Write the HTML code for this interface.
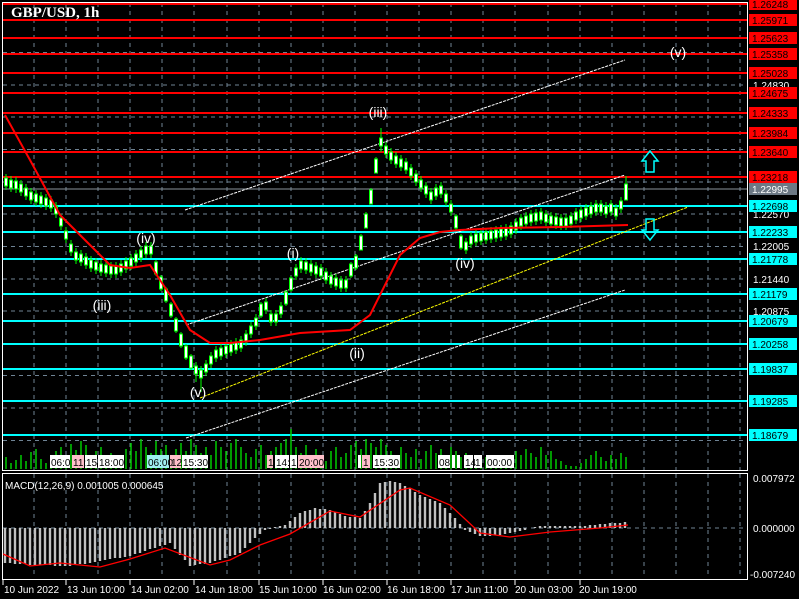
<!DOCTYPE html>
<html><head><meta charset="utf-8"><style>
html,body{margin:0;padding:0;background:#000;width:799px;height:599px;overflow:hidden}
svg{display:block}
text{font-family:"Liberation Sans",sans-serif;font-size:10px}
</style></head><body>
<svg width="799" height="599" xmlns="http://www.w3.org/2000/svg">
<g stroke="#6f8394" stroke-dasharray="4,4" stroke-width="1">
<path d="M34 3V470M66 3V470M98 3V470M130 3V470M162 3V470M194 3V470M227 3V470M259 3V470M291 3V470M323 3V470M355 3V470M387 3V470M419 3V470M451 3V470M483 3V470M515 3V470M548 3V470M580 3V470M612 3V470M644 3V470M676 3V470M708 3V470M740 3V470"/>
<path d="M34 474V578M66 474V578M98 474V578M130 474V578M162 474V578M194 474V578M227 474V578M259 474V578M291 474V578M323 474V578M355 474V578M387 474V578M419 474V578M451 474V578M483 474V578M515 474V578M548 474V578M580 474V578M612 474V578M644 474V578M676 474V578M708 474V578M740 474V578"/>
<path d="M3 20.5H747M3 52.5H747M3 85H747M3 117H747M3 149.5H747M3 182H747M3 214H747M3 246.5H747M3 279H747M3 311H747M3 343.5H747M3 375.5H747M3 408H747M3 440.5H747M3 528H747"/>
</g>
<g stroke="#ff0000" stroke-width="2">
<path d="M3 4H747M3 20H747M3 38H747M3 54H747M3 73H747M3 93H747M3 113H747M3 133H747M3 152H747M3 177H747"/>
</g>
<line x1="3" y1="189" x2="747" y2="189" stroke="#8a949c"/>
<g stroke="#00ffff" stroke-width="2">
<path d="M3 206H747M3 232H747M3 259H747M3 294H747M3 321H747M3 344H747M3 369H747M3 401H747M3 435H747"/>
</g>
<g stroke="#fff" stroke-dasharray="3,1">
<line x1="185" y1="210" x2="625" y2="60"/><line x1="186" y1="325" x2="625" y2="175"/><line x1="186" y1="438" x2="625" y2="290"/>
</g>
<line x1="200" y1="398" x2="688" y2="207" stroke="#ffff00" stroke-dasharray="3,1"/>
<path stroke="#00ff00" stroke-width="1" fill="none" d="M6 174v16M11 176v16M16 177v16M21 180v16M26 184v16M31 188v16M36 190v16M41 192v16M46 194v16M51 196v16M56 202v16M61 214v16M66 227v16M71 240v16M76 248v16M81 250v16M86 253v16M91 256v16M96 258v16M101 260v16M106 261v16M111 262v16M116 262v16M121 260v16M126 257v16M131 254v16M136 250v16M141 246v16M146 242v16M151 242v16M156 260v16M161 275v16M166 287v16M171 302v16M176 317v16M181 332v16M186 344v16M191 354v16M196 362v20M201 366v26M206 360v16M211 352v16M216 346v16M221 344v16M226 342v16M231 340v16M236 338v16M241 336v16M246 330v16M251 322v16M256 314v16M261 302v16M266 298v16M271 310v16M276 310v16M281 302v16M286 290v16M291 276v16M296 264v16M301 257v16M306 258v16M311 260v16M316 262v16M321 264v16M326 268v16M331 272v16M336 274v16M341 276v16M346 276v16M351 262v16M356 254v16M361 234v16M366 212v16M371 188v16M376 157v16M381 128v24M386 142v16M391 148v16M396 152v16M401 155v16M406 158v16M411 164v16M416 170v16M421 176v16M426 182v16M431 188v16M436 184v16M441 182v16M446 190v16M451 200v16M456 214v16M461 234v16M466 238v16M471 232v16M476 230v16M481 229v16M486 228v16M491 227v16M496 226v16M501 225v16M506 224v16M511 222v16M516 218v16M521 214v16M526 212v16M531 210v16M536 209v16M541 208v16M546 210v16M551 212v16M556 213v16M561 214v16M566 214v16M571 212v16M576 208v16M581 206v16M586 204v16M591 202v16M596 200v16M601 200v16M606 202v16M611 200v16M616 204v16M621 197v16M626 176v20"/>
<path stroke="#00ff00" stroke-width="1" fill="#fff" d="M4.5 178h3v8h-3zM9.5 180h3v8h-3zM14.5 181h3v8h-3zM19.5 184h3v8h-3zM24.5 188h3v8h-3zM29.5 192h3v8h-3zM34.5 194h3v8h-3zM39.5 196h3v8h-3zM44.5 198h3v8h-3zM49.5 200h3v8h-3zM54.5 206h3v8h-3zM59.5 218h3v8h-3zM64.5 231h3v8h-3zM69.5 244h3v8h-3zM74.5 252h3v8h-3zM79.5 254h3v8h-3zM84.5 257h3v8h-3zM89.5 260h3v8h-3zM94.5 262h3v8h-3zM99.5 264h3v8h-3zM104.5 265h3v8h-3zM109.5 266h3v8h-3zM114.5 266h3v8h-3zM119.5 264h3v8h-3zM124.5 261h3v8h-3zM129.5 258h3v8h-3zM134.5 254h3v8h-3zM139.5 250h3v8h-3zM144.5 246h3v8h-3zM149.5 246h3v8h-3zM154.5 262h3v12h-3zM159.5 277h3v12h-3zM164.5 289h3v12h-3zM169.5 304h3v12h-3zM174.5 319h3v12h-3zM179.5 334h3v12h-3zM184.5 346h3v12h-3zM189.5 356h3v12h-3zM194.5 366h3v8h-3zM199.5 370h3v8h-3zM204.5 364h3v8h-3zM209.5 356h3v8h-3zM214.5 350h3v8h-3zM219.5 348h3v8h-3zM224.5 346h3v8h-3zM229.5 344h3v8h-3zM234.5 342h3v8h-3zM239.5 340h3v8h-3zM244.5 334h3v8h-3zM249.5 326h3v8h-3zM254.5 318h3v8h-3zM259.5 304h3v12h-3zM264.5 302h3v8h-3zM269.5 314h3v8h-3zM274.5 314h3v8h-3zM279.5 306h3v8h-3zM284.5 292h3v12h-3zM289.5 278h3v12h-3zM294.5 268h3v8h-3zM299.5 261h3v8h-3zM304.5 262h3v8h-3zM309.5 264h3v8h-3zM314.5 266h3v8h-3zM319.5 268h3v8h-3zM324.5 272h3v8h-3zM329.5 276h3v8h-3zM334.5 278h3v8h-3zM339.5 280h3v8h-3zM344.5 280h3v8h-3zM349.5 264h3v12h-3zM354.5 256h3v12h-3zM359.5 236h3v14h-3zM364.5 214h3v14h-3zM369.5 190h3v14h-3zM374.5 159h3v14h-3zM379.5 138h3v8h-3zM384.5 146h3v8h-3zM389.5 152h3v8h-3zM394.5 156h3v8h-3zM399.5 159h3v8h-3zM404.5 162h3v8h-3zM409.5 168h3v8h-3zM414.5 174h3v8h-3zM419.5 180h3v8h-3zM424.5 186h3v8h-3zM429.5 192h3v8h-3zM434.5 188h3v8h-3zM439.5 186h3v8h-3zM444.5 194h3v8h-3zM449.5 204h3v8h-3zM454.5 216h3v12h-3zM459.5 236h3v12h-3zM464.5 242h3v8h-3zM469.5 236h3v8h-3zM474.5 234h3v8h-3zM479.5 233h3v8h-3zM484.5 232h3v8h-3zM489.5 231h3v8h-3zM494.5 230h3v8h-3zM499.5 229h3v8h-3zM504.5 228h3v8h-3zM509.5 226h3v8h-3zM514.5 222h3v8h-3zM519.5 218h3v8h-3zM524.5 216h3v8h-3zM529.5 214h3v8h-3zM534.5 213h3v8h-3zM539.5 212h3v8h-3zM544.5 214h3v8h-3zM549.5 216h3v8h-3zM554.5 217h3v8h-3zM559.5 218h3v8h-3zM564.5 218h3v8h-3zM569.5 216h3v8h-3zM574.5 212h3v8h-3zM579.5 210h3v8h-3zM584.5 208h3v8h-3zM589.5 206h3v8h-3zM594.5 204h3v8h-3zM599.5 204h3v8h-3zM604.5 206h3v8h-3zM609.5 204h3v8h-3zM614.5 208h3v8h-3zM619.5 201h3v8h-3zM624.5 184h3v16h-3z"/>
<polyline fill="none" stroke="#ff0000" stroke-width="2" points="5,115 30,160 60,215 90,245 110,265 130,268 150,265 170,295 190,330 210,343 230,343 260,340 300,333 350,330 370,315 400,255 420,238 440,232 460,230 500,228 560,227 628,225"/>
<g fill="#fff" font-size="14" text-anchor="middle" style="font-size:14px">
<text x="678" y="57" style="font-size:14px">(v)</text><text x="378" y="117" style="font-size:14px">(iii)</text><text x="146" y="243" style="font-size:14px">(iv)</text><text x="102" y="310" style="font-size:14px">(iii)</text><text x="293" y="258" style="font-size:14px">(i)</text><text x="357" y="358" style="font-size:14px">(ii)</text><text x="465" y="268" style="font-size:14px">(iv)</text><text x="198" y="397" style="font-size:14px">(v)</text>
</g>
<path d="M650 151 L658 161 L654 161 L654 172 L646 172 L646 161 L642 161 Z" fill="none" stroke="#00ffff" stroke-width="1.5"/>
<path d="M650 240 L658 230 L654 230 L654 219 L646 219 L646 230 L642 230 Z" fill="none" stroke="#00ffff" stroke-width="1.5"/>
<path stroke="#00cc00" stroke-width="1.5" d="M6 469v-12M11 469v-6M16 469v-9M21 469v-14M26 469v-8M31 469v-17M36 469v-20M41 469v-10M46 469v-6M51 469v-12M56 469v-18M61 469v-22M66 469v-14M71 469v-25M76 469v-19M81 469v-28M86 469v-24M91 469v-12M96 469v-18M101 469v-22M106 469v-10M111 469v-16M116 469v-8M121 469v-14M126 469v-20M131 469v-26M136 469v-18M141 469v-30M146 469v-22M151 469v-16M156 469v-28M161 469v-20M166 469v-24M171 469v-14M176 469v-20M181 469v-26M186 469v-18M191 469v-30M196 469v-24M201 469v-16M206 469v-22M211 469v-14M216 469v-28M221 469v-22M226 469v-18M231 469v-26M236 469v-30M241 469v-22M246 469v-16M251 469v-12M256 469v-20M261 469v-24M266 469v-14M271 469v-18M276 469v-22M281 469v-26M286 469v-30M291 469v-40M296 469v-22M301 469v-16M306 469v-24M311 469v-12M316 469v-20M321 469v-14M326 469v-8M331 469v-18M336 469v-22M341 469v-12M346 469v-16M351 469v-24M356 469v-28M361 469v-20M366 469v-30M371 469v-26M376 469v-22M381 469v-30M386 469v-24M391 469v-18M396 469v-14M401 469v-22M406 469v-16M411 469v-12M416 469v-20M421 469v-10M426 469v-18M431 469v-24M436 469v-16M441 469v-20M446 469v-14M451 469v-22M456 469v-18M461 469v-12M466 469v-16M471 469v-10M476 469v-14M481 469v-8M486 469v-12M491 469v-6M496 469v-10M501 469v-14M506 469v-8M511 469v-12M516 469v-18M521 469v-14M526 469v-20M531 469v-16M536 469v-12M541 469v-22M546 469v-14M551 469v-18M556 469v-10M561 469v-8M566 469v-4M571 469v-3M576 469v-3M581 469v-6M586 469v-10M591 469v-14M596 469v-18M601 469v-12M606 469v-8M611 469v-14M616 469v-10M621 469v-16M626 469v-12"/>
<g>
<rect x="50" y="455" width="20" height="13" fill="#fff"/><rect x="72" y="455" width="12" height="13" fill="#ffc0cb"/><rect x="85" y="455" width="12" height="13" fill="#fff"/><rect x="98" y="455" width="26" height="13" fill="#fff"/>
<rect x="147" y="455" width="22" height="13" fill="#a0f0f0"/><rect x="170" y="455" width="11" height="13" fill="#ffc0cb"/><rect x="182" y="455" width="26" height="13" fill="#fff"/>
<rect x="267" y="455" width="6" height="13" fill="#ffc0cb"/><rect x="275" y="455" width="14" height="13" fill="#fff"/><rect x="290" y="455" width="7" height="13" fill="#fff"/><rect x="298" y="455" width="26" height="13" fill="#ffc0cb"/>
<rect x="358" y="455" width="3" height="13" fill="#fff"/><rect x="362" y="455" width="8" height="13" fill="#ffc0cb"/><rect x="373" y="455" width="27" height="13" fill="#fff"/>
<rect x="438" y="455" width="12" height="13" fill="#fff"/><rect x="452" y="455" width="3" height="13" fill="#fff"/><rect x="457" y="455" width="3" height="13" fill="#fff"/><rect x="464" y="455" width="9" height="13" fill="#fff"/><rect x="474" y="455" width="8" height="13" fill="#fff"/><rect x="486" y="455" width="28" height="13" fill="#fff"/>
</g>
<g fill="#000">
<text x="51" y="466">06:0</text><text x="73" y="466">11:</text><text x="86" y="466">15</text><text x="99" y="466">18:00</text>
<text x="148" y="466">06:00</text><text x="171" y="466">12</text><text x="183" y="466">15:30</text>
<text x="268" y="466">1</text><text x="276" y="466">14:</text><text x="291" y="466">1</text><text x="299" y="466">20:00</text>
<text x="363" y="466">1</text><text x="374" y="466">15:30</text>
<text x="439" y="466">08</text><text x="465" y="466">14</text><text x="475" y="466">1</text><text x="487" y="466">00:00</text>
</g>
<path stroke="#c0c0c0" stroke-width="2.4" d="M5 528v35M10 528v35M15 528v36M20 528v36M25 528v36M30 528v37M35 528v37M40 528v37M45 528v37M50 528v37M55 528v38M60 528v38M65 528v38M70 528v38M75 528v37M80 528v36M85 528v36M90 528v35M95 528v34M100 528v33M105 528v32M110 528v31M115 528v30M120 528v30M125 528v29M130 528v28M135 528v26M140 528v25M145 528v23M150 528v21M155 528v20M160 528v18M165 528v17M170 528v15M175 528v21M180 528v27M185 528v32M190 528v38M195 528v37M200 528v36M205 528v36M210 528v35M215 528v33M220 528v32M225 528v30M230 528v28M235 528v27M240 528v25M245 528v20M250 528v15M255 528v10M260 528v6M265 528v2M270 528v1M275 528v-1M280 528v-2M285 528v-3M290 528v-7M295 528v-11M300 528v-15M305 528v-17M310 528v-18M315 528v-20M320 528v-19M325 528v-19M330 528v-18M335 528v-16M340 528v-14M345 528v-12M350 528v-11M355 528v-11M360 528v-10M365 528v-17M370 528v-25M375 528v-35M380 528v-45M385 528v-46M390 528v-47M395 528v-46M400 528v-45M405 528v-42M410 528v-40M415 528v-36M420 528v-33M425 528v-31M430 528v-29M435 528v-27M440 528v-25M445 528v-20M450 528v-15M455 528v-10M460 528v-4M465 528v2M470 528v4M475 528v6M480 528v8M485 528v8M490 528v8M495 528v7M500 528v7M505 528v6M510 528v5M515 528v4M520 528v3M525 528v2M535 528v-1M540 528v-2M545 528v-2M550 528v-2M555 528v-2M560 528v-2M565 528v-2M570 528v-2M575 528v-2M580 528v-2M585 528v-2M590 528v-3M595 528v-3M600 528v-4M605 528v-4M610 528v-5M615 528v-5M620 528v-5M625 528v-6"/>
<polyline fill="none" stroke="#ff0000" stroke-width="1.3" points="3,554 30,566 60,563 100,567 130,559 165,548 210,565 230,560 260,545 290,534 330,511 360,517 400,490 410,488 450,505 480,533 510,537 550,532 600,528 628,525"/>
<rect x="2.5" y="2.5" width="745" height="468" fill="none" stroke="#fff"/>
<rect x="2.5" y="473.5" width="745" height="106" fill="none" stroke="#fff"/>
<text x="5" y="489" fill="#fff">MACD(12,26,9) 0.001005 0.000645</text>
<text x="11" y="17" fill="#fff" style="font-family:'Liberation Serif',serif;font-size:15px;font-weight:bold">GBP/USD, 1h</text>
<g fill="#fff">
<text x="753" y="89">1.24830</text><text x="753" y="218">1.22570</text><text x="753" y="250">1.22005</text><text x="753" y="283">1.21440</text><text x="753" y="315">1.20875</text>
<text x="753" y="482">0.007972</text><text x="753" y="532">0.000000</text><text x="750" y="578">-0.007240</text>
</g>
<g fill="#ff0000">
<rect x="749" y="-2" width="48" height="12"/><rect x="749" y="14" width="48" height="12"/><rect x="749" y="32" width="48" height="12"/><rect x="749" y="48" width="48" height="12"/><rect x="749" y="67" width="48" height="12"/><rect x="749" y="87" width="48" height="12"/><rect x="749" y="107" width="48" height="12"/><rect x="749" y="127" width="48" height="12"/><rect x="749" y="146" width="48" height="12"/><rect x="749" y="171" width="48" height="12"/>
</g>
<g fill="#00ffff">
<rect x="749" y="200" width="48" height="12"/><rect x="749" y="226" width="48" height="12"/><rect x="749" y="253" width="48" height="12"/><rect x="749" y="288" width="48" height="12"/><rect x="749" y="315" width="48" height="12"/><rect x="749" y="338" width="48" height="12"/><rect x="749" y="363" width="48" height="12"/><rect x="749" y="395" width="48" height="12"/><rect x="749" y="429" width="48" height="12"/>
</g>
<rect x="749" y="183" width="48" height="12" fill="#6c7884"/>
<g fill="#000">
<text x="752" y="8">1.26248</text><text x="752" y="24">1.25971</text><text x="752" y="42">1.25623</text><text x="752" y="58">1.25358</text><text x="752" y="77">1.25028</text><text x="752" y="97">1.24675</text><text x="752" y="117">1.24333</text><text x="752" y="137">1.23984</text><text x="752" y="156">1.23640</text><text x="752" y="181">1.23218</text>
<text x="752" y="210">1.22698</text><text x="752" y="236">1.22233</text><text x="752" y="263">1.21778</text><text x="752" y="298">1.21179</text><text x="752" y="325">1.20679</text><text x="752" y="348">1.20258</text><text x="752" y="373">1.19837</text><text x="752" y="405">1.19285</text><text x="752" y="439">1.18679</text>
</g>
<text x="752" y="193" fill="#fff">1.22995</text>
<g fill="#fff">
<text x="4" y="593">10 Jun 2022</text><text x="67" y="593">13 Jun 10:00</text><text x="131" y="593">14 Jun 02:00</text><text x="195" y="593">14 Jun 18:00</text><text x="259" y="593">15 Jun 10:00</text><text x="323" y="593">16 Jun 02:00</text><text x="387" y="593">16 Jun 18:00</text><text x="451" y="593">17 Jun 11:00</text><text x="515" y="593">20 Jun 03:00</text><text x="579" y="593">20 Jun 19:00</text>
</g>
<path stroke="#fff" d="M3 580v5M66 580v5M130 580v5M194 580v5M259 580v5M323 580v5M387 580v5M451 580v5M515 580v5M580 580v5"/>
</svg>
</body></html>
